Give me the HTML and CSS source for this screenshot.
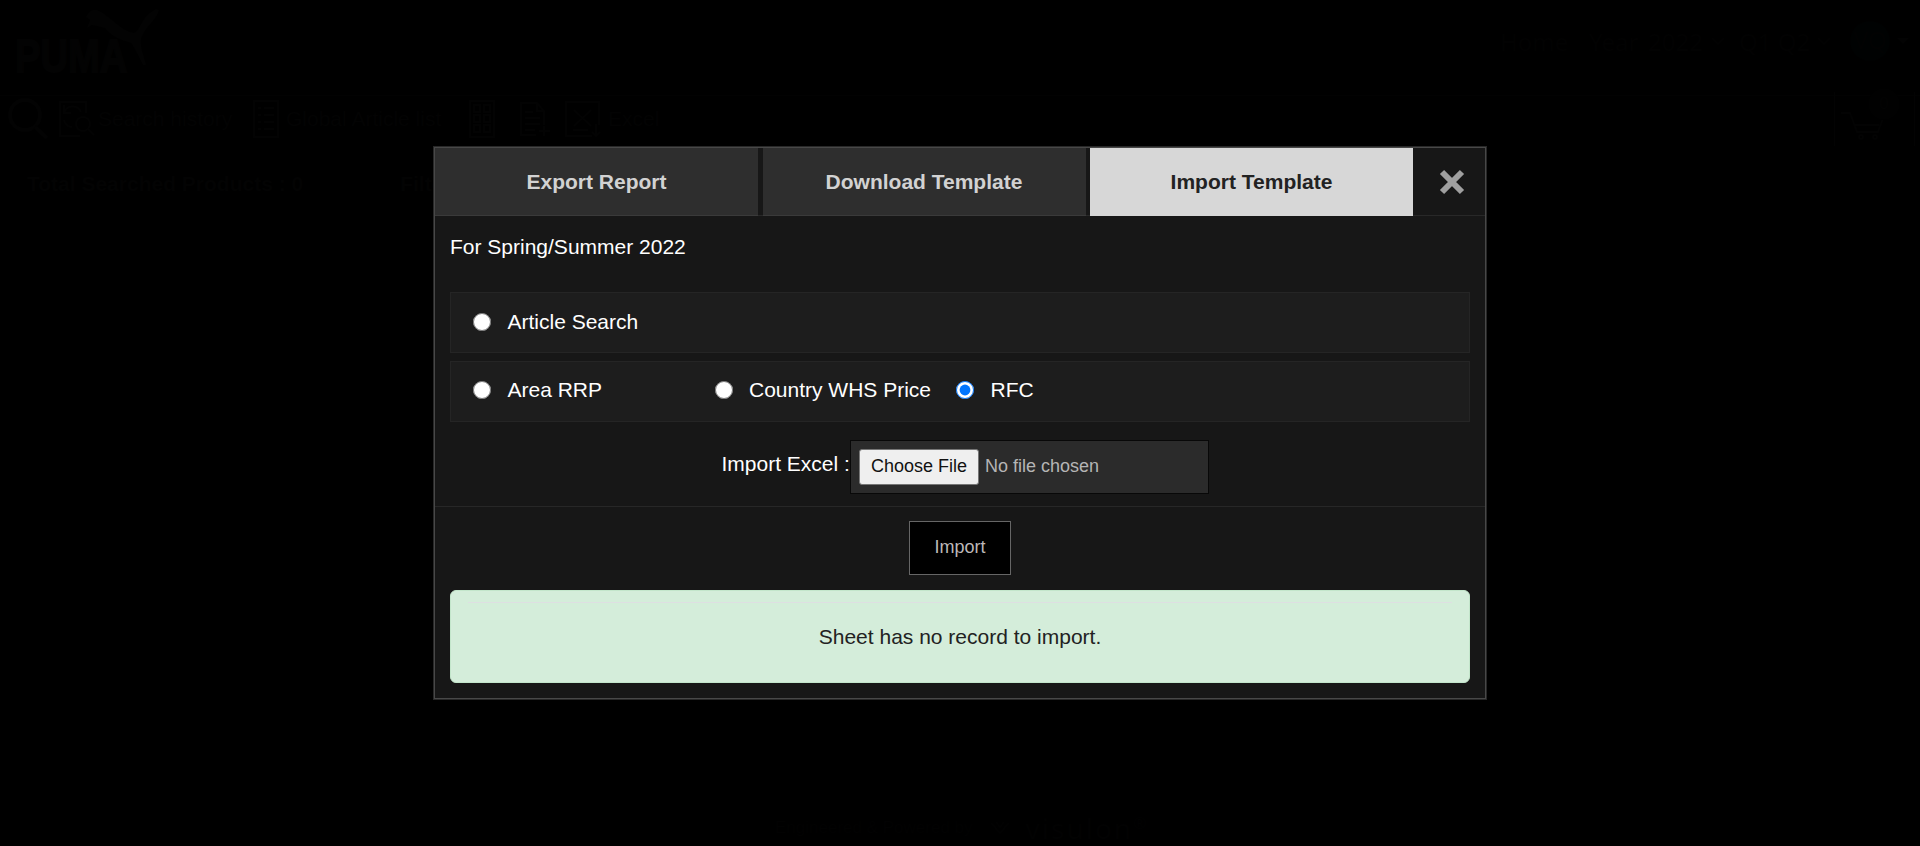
FILE: index.html
```html
<!DOCTYPE html>
<html lang="en">
<head>
<meta charset="utf-8">
<title>Import Template</title>
<link rel="stylesheet" href="styles.css">
</head>
<body>
<div class="page">
  <header class="header">
    <div class="logo">
      <span class="logo-word">PUMA</span>
      <svg class="logo-cat" viewBox="0 0 74 58"><path d="M1 9 Q5 0 12 2 C26 8 34 22 49 25 C56 22 56 8 71 1 L74 2 C72 12 60 18 56 31 C55 41 60 50 61 57 L58 57 C52 45 49 39 46 35 C36 32 27 29 20 20 L7 17 L2 20 L5 12Z"/></svg>
    </div>
    <nav class="nav">
      <span class="nav-home">Home</span>
      <span class="nav-year">Year</span>
      <span class="nav-value">2022</span>
      <svg class="chevron" viewBox="0 0 14 8"><path d="M1 1l6 6 6-6"/></svg>
      <span class="nav-quarter">Q1 Q2</span>
      <svg class="chevron chevron-last" viewBox="0 0 14 8"><path d="M1 1l6 6 6-6"/></svg>
      <span class="avatar">VQ</span>
      <span class="caret"></span>
    </nav>
  </header>
  <div class="toolbar">
    <svg class="ico-search" viewBox="0 0 42 42"><circle cx="18" cy="17" r="15"/><path d="M28 29l12 11"/></svg>
    <svg class="ico-history" viewBox="0 0 36 38"><path d="M27 13V2H1v34h20M5 13a9 9 0 0 1 17-1M5 5v8h7M5 20a9 9 0 0 0 8 7"/><circle cx="24" cy="24" r="7"/><path d="M29 29l6 6"/></svg>
    <span class="tool-label tool-history">Search history</span>
    <svg class="ico-list" viewBox="0 0 26 38"><path d="M1 1h24v36H1zM5 8h3M11 8h10M5 15h3M11 15h10M5 22h3M11 22h10M5 29h3M11 29h10"/></svg>
    <span class="tool-label tool-global">Global Article list</span>
    <svg class="ico-grid" viewBox="0 0 26 38"><path d="M1 1h24v36H1zM5 5h6v7H5zM15 5h6v7h-6zM5 15h6v7H5zM15 15h6v7h-6zM5 25h6v7H5zM15 25h6v7h-6z"/></svg>
    <svg class="ico-doc" viewBox="0 0 32 34"><path d="M25 23V9l-7-8H2v32h15M18 1v8h7M6 10h8M6 16h15M6 22h15M6 28h10M25 24v10M20 29h11"/></svg>
    <svg class="ico-excel" viewBox="0 0 38 38"><path d="M35 25V2H2v34h26M10 10l17 16M27 10L10 26M9 30h15M32 24v12M28 32l4 4 4-4"/></svg>
    <span class="tool-label">Excel</span>
    <div class="cart">
      <svg viewBox="0 0 44 30"><path d="M0 2h9l7 19h21l5-14M14 14h24"/><circle cx="20" cy="26" r="2"/><circle cx="34" cy="26" r="2"/></svg>
      <span class="badge">0</span>
    </div>
  </div>
  <div class="summary"><span>Total Searched Products : 0</span><span class="filter">Filter</span></div>
  <footer class="footer">
    <span>Engineered &amp; Powered by</span>
    <svg viewBox="0 0 20 14"><path d="M1 2l9 10 9-10M6 1l4 5 4-5"/></svg>
    <span class="brand">visulon<sup>®</sup></span>
  </footer>
</div>

<div class="modal">
  <div class="tabs">
    <button class="tab">Export Report</button>
    <button class="tab">Download Template</button>
    <button class="tab tab-active">Import Template</button>
    <button class="close" aria-label="Close"><svg viewBox="0 0 26 26"><path d="M3 3l20 20M23 3L3 23"/></svg></button>
  </div>
  <div class="modal-body">
    <p class="season">For Spring/Summer 2022</p>
    <div class="options">
      <label class="option"><input type="radio" name="kind"><span>Article Search</span></label>
    </div>
    <div class="options options-prices">
      <label class="option"><input type="radio" name="kind"><span>Area RRP</span></label>
      <label class="option"><input type="radio" name="kind"><span>Country WHS Price</span></label>
      <label class="option"><input type="radio" name="kind" checked><span>RFC</span></label>
    </div>
    <div class="file-row">
      <span class="file-label">Import Excel :</span>
      <div class="file-box"><button class="choose">Choose File</button><span class="file-name">No file chosen</span></div>
    </div>
  </div>
  <div class="modal-foot">
    <button class="import">Import</button>
    <div class="alert"><p class="alert-text">Sheet has no record to import.</p></div>
  </div>
</div>
</body>
</html>
```

FILE: styles.css
```css
* { box-sizing: border-box; }
body {
  margin: 0;
  height: 846px;
  overflow: hidden;
  background: #000;
  font-family: "Liberation Sans", Arial, sans-serif;
  font-size: 21px;
  color: #fff;
}
p { margin: 0; }
button { font-family: inherit; padding: 0; margin: 0; border-radius: 0; }
svg { display: block; flex: none; }

/* Page under the dimmed backdrop */
.page { height: 846px; display: flex; flex-direction: column; color: #030303; }
.page svg { fill: none; stroke: #030303; stroke-width: 2; }
.header { height: 96px; display: flex; justify-content: space-between; border-bottom: 1px solid #020202; }
.logo { display: flex; padding: 8px 0 0 15px; }
.logo-word {
  width: 70px;
  margin-top: 25px;
  font: 900 46px/46px "Liberation Sans", Arial, sans-serif;
  -webkit-text-stroke: 2px #030303;
  transform: scaleX(.83);
  transform-origin: left;
}
.page .logo-cat { width: 74px; height: 58px; fill: #030303; stroke: none; }
.nav { display: flex; align-items: center; height: 82px; width: 420px; font: 24px "Noto Sans", sans-serif; color: #020202; white-space: nowrap; }
.nav-home { width: 89px; }
.nav-year { width: 59px; }
.nav-value { width: 63px; }
.page .chevron { width: 14px; height: 8px; margin-right: 14px; stroke: #020202; }
.nav-quarter { width: 78px; }
.page .chevron-last { margin-right: 19px; }
.avatar { width: 40px; height: 40px; border-radius: 50%; background: #000202; text-align: center; line-height: 38px; }
.caret { margin-left: 7px; border: 6px solid transparent; border-top-color: #030303; border-bottom: 0; }
.toolbar { height: 46px; display: flex; align-items: center; padding-left: 7px; white-space: nowrap; }
.page .ico-search { width: 42px; height: 42px; margin-right: 10px; stroke-width: 4; }
.ico-history { width: 36px; height: 38px; margin-right: 3px; }
.tool-history { width: 155px; }
.ico-list { width: 26px; height: 38px; margin-right: 7px; }
.tool-global { width: 183px; }
.ico-grid { width: 26px; height: 38px; margin-right: 24px; }
.ico-doc { width: 32px; height: 34px; margin-right: 13px; }
.ico-excel { width: 38px; height: 38px; margin-right: 6px; }
.cart { position: relative; width: 81px; height: 54px; margin: 0 5px 0 auto; padding: 19px 0 0 6px; border: solid #030303; border-width: 0 1px; }
.cart svg { width: 44px; height: 30px; }
.badge { position: absolute; left: 33px; top: -4px; width: 32px; height: 32px; border-radius: 50%; background: #010101; text-align: center; font-size: 17px; line-height: 32px; }
.summary { display: flex; padding: 30px 0 0 27px; font-weight: bold; }
.filter { margin-left: 97px; }
.footer { margin-top: auto; height: 36px; display: flex; align-items: center; padding-left: 775px; font-size: 17px; color: #020202; }
.page .footer svg { width: 20px; height: 14px; margin: 0 16px 0 17px; stroke: #020202; }
.brand { font: 28px/28px "Noto Sans", sans-serif; letter-spacing: 2px; }
.brand sup { font-size: 16px; line-height: 0; }

/* Dialog */
.modal {
  position: absolute;
  left: 433px;
  top: 146px;
  width: 1054px;
  height: 554px;
  border: 1px solid #282828;
  outline: 1px solid #484848;
  outline-offset: -2px;
  padding: 1px;
  background: #171717;
}
.tabs { display: flex; height: 68px; box-shadow: inset 0 -1px #282828; }
.tab {
  width: 323px;
  margin-right: 4.5px;
  border: 0;
  border-bottom: 1px solid #3a3a3a;
  background: #2e2e2e;
  color: #d2d2d2;
  font-size: 21px;
  font-weight: bold;
}
.tab-active { margin-right: 0; border-color: #d7d7d7; background: #d7d7d7; color: #222; }
.close { flex: 1; display: flex; align-items: center; justify-content: center; border: 0; background: none; padding-left: 5px; }
.close svg { width: 26px; height: 26px; fill: none; stroke: #9f9f9f; stroke-width: 6; }
.modal-body { height: 291px; padding: 17px 15px 0; border-bottom: 1px solid #272727; }
.season { height: 59px; line-height: 28px; }
.options { display: flex; align-items: center; height: 61px; margin-bottom: 8px; padding: 0 0 2px 22px; border: 1px solid #252525; background: #1d1d1d; }
.options-prices { padding-bottom: 4px; }
.option { display: flex; align-items: center; width: 241.5px; white-space: nowrap; }
.option input { width: 18px; height: 18px; margin: 0 16.5px 0 0; flex: none; }
.file-row { display: flex; padding: 10px 0 0 271.5px; }
.file-label { width: 128.5px; line-height: 48px; white-space: nowrap; }
.file-box { display: flex; align-items: center; gap: 6px; width: 359px; height: 54px; padding-left: 8px; border: 1px solid #080808; background: #2b2b2b; color: #b5b5b5; font-size: 18px; }
.file-name { padding-bottom: 2px; }
.choose { width: 120px; height: 36px; padding-bottom: 2px; border: 1px solid #767676; border-radius: 3px; background: #efefef; color: #111; font-size: 18px; }
.modal-foot { padding: 14px 15px 0; display: flex; flex-direction: column; align-items: center; }
.import { width: 102px; height: 54px; padding-bottom: 1px; border: 1px solid #666; background: #000; color: #bdb8b8; font-size: 18px; }
.alert { width: 100%; height: 93px; margin-top: 15px; padding: 11px 17px 0; border: 1px solid #c3e6cb; border-radius: 6px; background: #d4edda; }
.alert-text { padding-top: 22px; border-top: 1px solid #dedfe2; text-align: center; line-height: 24px; color: #222; }
```
